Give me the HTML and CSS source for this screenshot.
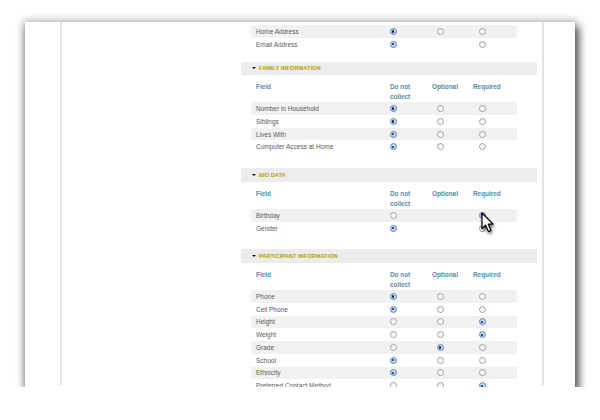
FILE: index.html
```html
<!DOCTYPE html>
<html>
<head>
<meta charset="utf-8">
<link rel="stylesheet" href="styles.css">
</head>
<body>
<div class="window">
  <div class="sidebar"></div>
  <div class="main">
    <div class="content">
      <div class="rows first-rows">
        <div class="row"><span class="label">Home Address</span><span class="c1"><i class="radio on"></i></span><span class="c2"><i class="radio"></i></span><span class="c3"><i class="radio"></i></span></div>
        <div class="row"><span class="label">Email Address</span><span class="c1"><i class="radio on"></i></span><span class="c2"></span><span class="c3"><i class="radio"></i></span></div>
      </div>

      <div class="section first">
        <div class="band"><span class="tri"></span>FAMILY INFORMATION</div>
        <div class="head"><span class="label">Field</span><span class="h1">Do not<br>collect</span><span>Optional</span><span>Required</span></div>
        <div class="rows">
          <div class="row"><span class="label">Number in Household</span><span class="c1"><i class="radio on"></i></span><span class="c2"><i class="radio"></i></span><span class="c3"><i class="radio"></i></span></div>
          <div class="row"><span class="label">Siblings</span><span class="c1"><i class="radio on"></i></span><span class="c2"><i class="radio"></i></span><span class="c3"><i class="radio"></i></span></div>
          <div class="row"><span class="label">Lives With</span><span class="c1"><i class="radio on"></i></span><span class="c2"><i class="radio"></i></span><span class="c3"><i class="radio"></i></span></div>
          <div class="row"><span class="label">Computer Access at Home</span><span class="c1"><i class="radio on"></i></span><span class="c2"><i class="radio"></i></span><span class="c3"><i class="radio"></i></span></div>
        </div>
      </div>

      <div class="section">
        <div class="band"><span class="tri"></span>BIO DATA</div>
        <div class="head"><span class="label">Field</span><span class="h1">Do not<br>collect</span><span>Optional</span><span>Required</span></div>
        <div class="rows">
          <div class="row"><span class="label">Birthday</span><span class="c1"><i class="radio"></i></span><span class="c2"></span><span class="c3"><i class="radio on"></i></span></div>
          <div class="row"><span class="label">Gender</span><span class="c1"><i class="radio on"></i></span><span class="c2"></span><span class="c3"><i class="radio"></i></span></div>
        </div>
      </div>

      <div class="section">
        <div class="band"><span class="tri"></span>PARTICIPANT INFORMATION</div>
        <div class="head"><span class="label">Field</span><span class="h1">Do not<br>collect</span><span>Optional</span><span>Required</span></div>
        <div class="rows">
          <div class="row"><span class="label">Phone</span><span class="c1"><i class="radio on"></i></span><span class="c2"><i class="radio"></i></span><span class="c3"><i class="radio"></i></span></div>
          <div class="row"><span class="label">Cell Phone</span><span class="c1"><i class="radio on"></i></span><span class="c2"><i class="radio"></i></span><span class="c3"><i class="radio"></i></span></div>
          <div class="row"><span class="label">Height</span><span class="c1"><i class="radio"></i></span><span class="c2"><i class="radio"></i></span><span class="c3"><i class="radio on"></i></span></div>
          <div class="row"><span class="label">Weight</span><span class="c1"><i class="radio"></i></span><span class="c2"><i class="radio"></i></span><span class="c3"><i class="radio on"></i></span></div>
          <div class="row"><span class="label">Grade</span><span class="c1"><i class="radio"></i></span><span class="c2"><i class="radio on"></i></span><span class="c3"><i class="radio"></i></span></div>
          <div class="row"><span class="label">School</span><span class="c1"><i class="radio on"></i></span><span class="c2"><i class="radio"></i></span><span class="c3"><i class="radio"></i></span></div>
          <div class="row"><span class="label">Ethnicity</span><span class="c1"><i class="radio on"></i></span><span class="c2"><i class="radio"></i></span><span class="c3"><i class="radio"></i></span></div>
          <div class="row"><span class="label">Preferred Contact Method</span><span class="c1"><i class="radio"></i></span><span class="c2"><i class="radio"></i></span><span class="c3"><i class="radio on"></i></span></div>
        </div>
      </div>
    </div>
  </div>
  <div class="rightpane"></div>
  <svg class="cursor" width="16" height="24" viewBox="0 0 16 24">
    <path d="M1 1 L1 16.5 L4.6 13.2 L7.4 19.6 L10 18.5 L7.3 12.2 L12 12.2 Z" fill="#fff" stroke="#000" stroke-width="1.2" stroke-linejoin="round"/>
  </svg>
</div>
</body>
</html>
```
FILE: styles.css
```css
html, body {
  margin: 0;
  padding: 0;
  background: #fff;
}

body {
  font-family: "Liberation Sans", Arial, sans-serif;
}

.window {
  position: relative;
  margin: 22px 0 0 25px;
  width: 550px;
  height: 365px;
  background: #fff;
  box-shadow: 3px 6px 8px 1px rgba(0, 0, 0, 0.6), 0 0 8px 2px rgba(0, 0, 0, 0.25);
  display: flex;
  overflow: hidden;
}

.sidebar {
  width: 35px;
  flex: none;
  border-right: 2px solid #e3e3e3;
  margin-bottom: 2px;
}

.main {
  width: 480px;
  flex: none;
}

.rightpane {
  width: 31px;
  flex: none;
  border-left: 2px solid #e3e3e3;
  margin-bottom: 2px;
}

.content {
  margin-left: 179px;
  width: 296px;
  padding-top: 3px;
}

.rows {
  margin-left: 10px;
  width: 266px;
}

.row, .head {
  display: grid;
  grid-template-columns: 138px 43px 41px 44px;
  align-items: center;
}

.row {
  height: 12.75px;
  font-size: 6.5px;
  color: #5a5a5a;
}

.rows .row:nth-child(odd) {
  background: #f1f1f1;
}

.label {
  padding-left: 5px;
  white-space: nowrap;
}

.c1, .c2, .c3 {
  display: flex;
  align-items: center;
}

.c1 { padding-left: 0.5px; }
.c2 { padding-left: 4.5px; }
.c3 { padding-left: 5.5px; }

.radio {
  display: block;
  box-sizing: border-box;
  width: 7px;
  height: 7px;
  border-radius: 50%;
  border: 0.8px solid #a0a0a0;
  background: linear-gradient(#f2f2f2, #ffffff);
  position: relative;
}

.radio.on {
  border-color: #5d86bf;
  background: radial-gradient(circle at 50% 40%, #d8e8fa 0%, #9dbfe8 100%);
}

.radio.on::after {
  content: "";
  position: absolute;
  left: 50%;
  top: 50%;
  width: 2.4px;
  height: 2.4px;
  margin: -1.2px 0 0 -1.2px;
  border-radius: 50%;
  background: #14203a;
}

.section {
  margin-top: 15px;
}

.section.first {
  margin-top: 11px;
}

.band {
  height: 13.5px;
  background: #ececec;
  display: flex;
  align-items: center;
  font-size: 5.7px;
  font-weight: bold;
  color: #b3a300;
  white-space: nowrap;
}

.tri {
  width: 0;
  height: 0;
  border-left: 2px solid transparent;
  border-right: 2px solid transparent;
  border-top: 2.6px solid #111;
  margin: 0 3px 0 11px;
}

.head {
  margin: 7.2px 0 0 10px;
  width: 266px;
  font-size: 6.4px;
  font-weight: bold;
  color: #5a8aa3;
  line-height: 10px;
  align-items: start;
  height: 20px;
}

.head .h1 {
  padding-left: 1px;
}

.cursor {
  position: absolute;
  left: 456px;
  top: 190px;
  filter: drop-shadow(1.5px 2.5px 1.5px rgba(0, 0, 0, 0.55));
}
```
